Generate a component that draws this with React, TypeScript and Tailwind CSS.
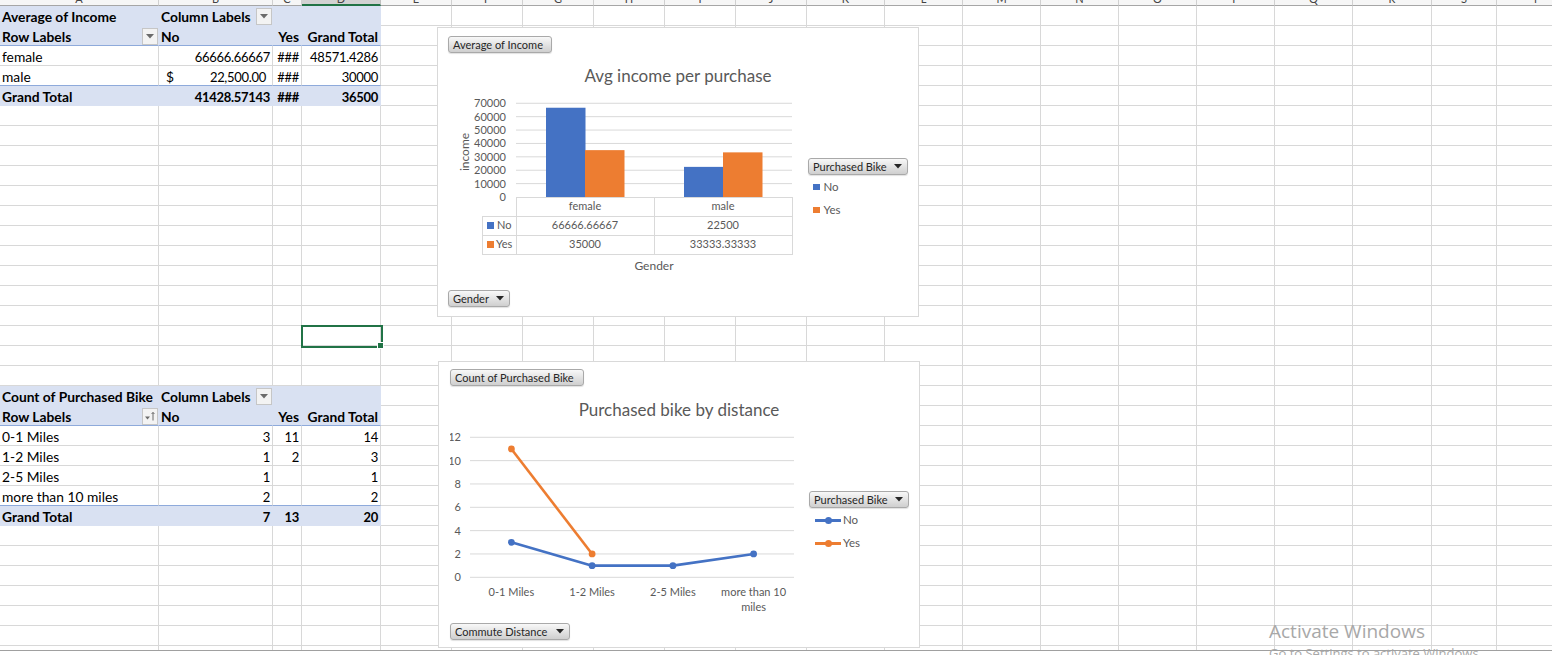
import React from 'react';

// sheet column widths (px), matched to the gridlines of the reference
const LETTERS = 'ABCDEFGHIJKLMNOPQRST'.split('');
const GRID = 'grid grid-cols-[159px_114px_29px_79px_repeat(6,71px)_repeat(7,78px)_79px_65px_78px]';
const ROWS = 33;

type Cell = { t?: string; b?: boolean; right?: boolean; acct?: boolean; dd?: 'filter' | 'sort' };
type PivotRow = { fill?: boolean; line?: boolean; cells: Cell[] };

const pivots: Record<number, PivotRow> = {
  1: { fill: true, cells: [{ t: 'Average of Income', b: true }, { t: 'Column Labels', b: true, dd: 'filter' }, {}, {}] },
  2: {
    fill: true,
    line: true,
    cells: [
      { t: 'Row Labels', b: true, dd: 'filter' },
      { t: 'No', b: true },
      { t: 'Yes', b: true, right: true },
      { t: 'Grand Total', b: true, right: true },
    ],
  },
  3: { cells: [{ t: 'female' }, { t: '66666.66667', right: true }, { t: '###', right: true }, { t: '48571.4286', right: true }] },
  4: {
    line: true,
    cells: [{ t: 'male' }, { t: '22,500.00', right: true, acct: true }, { t: '###', right: true }, { t: '30000', right: true }],
  },
  5: {
    fill: true,
    cells: [
      { t: 'Grand Total', b: true },
      { t: '41428.57143', b: true, right: true },
      { t: '###', b: true, right: true },
      { t: '36500', b: true, right: true },
    ],
  },
  20: { fill: true, cells: [{ t: 'Count of Purchased Bike', b: true }, { t: 'Column Labels', b: true, dd: 'filter' }, {}, {}] },
  21: {
    fill: true,
    line: true,
    cells: [
      { t: 'Row Labels', b: true, dd: 'sort' },
      { t: 'No', b: true },
      { t: 'Yes', b: true, right: true },
      { t: 'Grand Total', b: true, right: true },
    ],
  },
  22: { cells: [{ t: '0-1 Miles' }, { t: '3', right: true }, { t: '11', right: true }, { t: '14', right: true }] },
  23: { cells: [{ t: '1-2 Miles' }, { t: '1', right: true }, { t: '2', right: true }, { t: '3', right: true }] },
  24: { cells: [{ t: '2-5 Miles' }, { t: '1', right: true }, {}, { t: '1', right: true }] },
  25: { line: true, cells: [{ t: 'more than 10 miles' }, { t: '2', right: true }, {}, { t: '2', right: true }] },
  26: {
    fill: true,
    cells: [
      { t: 'Grand Total', b: true },
      { t: '7', b: true, right: true },
      { t: '13', b: true, right: true },
      { t: '20', b: true, right: true },
    ],
  },
};

function DropBox({ sort }: { sort?: boolean }) {
  return (
    <span className="-mr-[2px] mb-[1px] flex h-[17px] w-[16px] shrink-0 items-center justify-center border border-[#c6c6c6] bg-[#f3f3f3]">
      {sort ? (
        <svg width="12" height="12" viewBox="0 0 12 12">
          <path d="M1 6.5h5L3.5 9.5z" fill="#6b6b6b" />
          <path d="M9 2.5v8M7.6 4l1.4-1.6L10.4 4" stroke="#6b6b6b" strokeWidth="1" fill="none" />
        </svg>
      ) : (
        <svg width="8" height="5" viewBox="0 0 8 5">
          <path d="M0 0h8L4 4.5z" fill="#6b6b6b" />
        </svg>
      )}
    </span>
  );
}

function SheetCell({ row, col }: { row: number; col: number }) {
  const p = col < 4 ? pivots[row] : undefined;
  const cell = p?.cells[col];
  const fill = !!p?.fill;
  const line = !!p?.line;
  // Lato digits run wider than Calibri's, so numbers get a slightly smaller size
  const numeric = !!cell?.t && /^[\d.,#]+$/.test(cell.t);
  return (
    <div
      className={`flex h-[20px] items-center border-r border-b whitespace-nowrap px-[2px] pt-[2px] leading-[18px] text-black ${
        numeric ? 'text-[13px] tracking-[-0.3px]' : 'text-[13.8px]'
      } ${fill ? 'bg-[#d9e1f2] border-r-[#d9e1f2]' : 'border-r-[#d8d8d8]'} ${
        line ? 'border-b-[#8eaadb]' : fill ? 'border-b-[#d9e1f2]' : 'border-b-[#d8d8d8]'
      } ${cell?.dd || cell?.acct ? 'justify-between' : cell?.right ? 'justify-end' : ''} ${cell?.b ? 'font-bold' : ''} ${
        cell?.acct ? 'pl-[7px] pr-[6px]' : ''
      }`}
    >
      {cell?.acct && <span className="text-[13.8px]">$</span>}
      {cell?.t && <span>{cell.t}</span>}
      {cell?.dd && <DropBox sort={cell.dd === 'sort'} />}
    </div>
  );
}

function FieldBtn({ label, arrow, className }: { label: string; arrow?: boolean; className: string }) {
  return (
    <div
      className={`flex h-[17px] shrink-0 items-center justify-between self-start rounded-[3px] border border-[#a9a9a9] bg-linear-to-b from-[#f8f8f8] to-[#cfcfcf] pl-[4px] pr-[5px] text-[11px] leading-none text-[#262626] shadow-[0_1px_1px_rgba(0,0,0,0.12)] ${className}`}
    >
      <span>{label}</span>
      {arrow && (
        <svg width="8" height="5" viewBox="0 0 8 5">
          <path d="M0 0h8L4 4.5z" fill="#262626" />
        </svg>
      )}
    </div>
  );
}

const BLUE = '#4472c4';
const ORANGE = '#ed7d31';
const GRIDC = '#d9d9d9';
const TXT = '#595959';

function Legend({ line }: { line?: boolean }) {
  const items = [
    { l: 'No', c: 'bg-[#4472c4]' },
    { l: 'Yes', c: 'bg-[#ed7d31]' },
  ];
  return (
    <div className="flex flex-col pt-[105px]">
      <FieldBtn label="Purchased Bike" arrow className="w-[100px]" />
      <div className="mt-[4px] flex flex-col gap-[7px] text-[11.5px] text-[#595959]">
        {items.map((it) =>
          line ? (
            <div key={it.l} className="flex h-[16px] items-center pl-[6px]">
              <span className="relative flex h-[3px] w-[26px] items-center justify-center rounded-full">
                <span className={`absolute inset-0 ${it.c}`} />
                <span className={`relative h-[7px] w-[7px] rounded-full ${it.c}`} />
              </span>
              <span className="ml-[2px]">{it.l}</span>
            </div>
          ) : (
            <div key={it.l} className="flex h-[16px] items-center gap-[4px] pl-[5px]">
              <span className={`h-[6.5px] w-[6.5px] ${it.c}`} />
              <span>{it.l}</span>
            </div>
          )
        )}
      </div>
    </div>
  );
}

function IncomeChart() {
  const y0 = 169;
  const step = 13.39;
  const yv = (v: number) => y0 - (v / 10000) * step;
  const bars = [
    { x: 108, v: 66666.67, c: BLUE },
    { x: 147, v: 35000, c: ORANGE },
    { x: 246, v: 22500, c: BLUE },
    { x: 285, v: 33333.33, c: ORANGE },
  ];
  return (
    <div className="absolute left-[437px] top-[27px] flex h-[290px] w-[482px] flex-col border border-[#d9d9d9] bg-white pl-[10px] pt-[8px]">
      <FieldBtn label="Average of Income" className="w-[104px]" />
      <div className="flex">
        <svg width="360" height="237" viewBox="10 25 360 237" fontFamily="Lato, 'Liberation Sans', sans-serif">
          <text x="240" y="54" textAnchor="middle" fontSize="17" fill={TXT}>
            Avg income per purchase
          </text>
          {[0, 1, 2, 3, 4, 5, 6, 7].map((i) => (
            <g key={i}>
              {i > 0 && <line x1="78" x2="354" y1={y0 - i * step} y2={y0 - i * step} stroke={GRIDC} />}
              <text x="68" y={y0 - i * step + 4} textAnchor="end" fontSize="11" fill={TXT}>
                {i * 10000}
              </text>
            </g>
          ))}
          <text x="27" y="128" textAnchor="middle" fontSize="12" fill={TXT} transform="rotate(-90 27 124)">
            income
          </text>
          {bars.map((b) => (
            <rect key={b.x} x={b.x} y={yv(b.v)} width="39.5" height={y0 - yv(b.v)} fill={b.c} />
          ))}
          {/* data table */}
          <g stroke={GRIDC} strokeWidth="1">
            <line x1="78" x2="354.5" y1="169.5" y2="169.5" />
            <line x1="44" x2="354.5" y1="188.5" y2="188.5" />
            <line x1="44" x2="354.5" y1="207.5" y2="207.5" />
            <line x1="44" x2="354.5" y1="226.5" y2="226.5" />
            <line x1="44.5" x2="44.5" y1="188" y2="227" />
            <line x1="78.5" x2="78.5" y1="169" y2="227" />
            <line x1="216.5" x2="216.5" y1="169" y2="227" />
            <line x1="354.5" x2="354.5" y1="169" y2="227" />
          </g>
          <g fontSize="11" fill={TXT} textAnchor="middle">
            <text x="147" y="182">female</text>
            <text x="285" y="182">male</text>
            <text x="147" y="201">66666.66667</text>
            <text x="285" y="201">22500</text>
            <text x="147" y="220">35000</text>
            <text x="285" y="220">33333.33333</text>
          </g>
          <rect x="49" y="194" width="7" height="7" fill={BLUE} />
          <text x="59" y="201" fontSize="11" fill={TXT}>
            No
          </text>
          <rect x="49" y="213" width="7" height="7" fill={ORANGE} />
          <text x="58" y="220" fontSize="11" fill={TXT}>
            Yes
          </text>
          <text x="216" y="242" textAnchor="middle" fontSize="12" fill={TXT}>
            Gender
          </text>
        </svg>
        <Legend />
      </div>
      <FieldBtn label="Gender" arrow className="w-[62px]" />
    </div>
  );
}

function DistanceChart() {
  const y0 = 215.3;
  const unit = 11.667;
  const xs = [72.4, 153.1, 233.9, 314.6];
  const no = [3, 1, 1, 2];
  const yes = [11, 2];
  const pts = (vals: number[]) => vals.map((v, i) => `${xs[i]},${y0 - v * unit}`).join(' ');
  const labels = ['0-1 Miles', '1-2 Miles', '2-5 Miles'];
  return (
    <div className="absolute left-[438px] top-[361px] flex h-[287px] w-[482px] flex-col border border-[#d9d9d9] bg-white pl-[11px] pt-[7px]">
      <FieldBtn label="Count of Purchased Bike" className="w-[134px]" />
      <div className="flex">
        <svg width="359" height="237" viewBox="11 24 359 237" fontFamily="Lato, 'Liberation Sans', sans-serif">
          <text x="240" y="54" textAnchor="middle" fontSize="17" fill={TXT}>
            Purchased bike by distance
          </text>
          {[0, 2, 4, 6, 8, 10, 12].map((v) => (
            <g key={v}>
              <line x1="31" x2="355" y1={y0 - v * unit} y2={y0 - v * unit} stroke={GRIDC} />
              <text x="22" y={y0 - v * unit + 4} textAnchor="end" fontSize="11" fill={TXT}>
                {v}
              </text>
            </g>
          ))}
          {labels.map((l, i) => (
            <text key={l} x={xs[i]} y="234" textAnchor="middle" fontSize="11" fill={TXT}>
              {l}
            </text>
          ))}
          <text x={xs[3]} y="234" textAnchor="middle" fontSize="11" fill={TXT}>
            more than 10
          </text>
          <text x={xs[3]} y="249" textAnchor="middle" fontSize="11" fill={TXT}>
            miles
          </text>
          <polyline points={pts(no)} fill="none" stroke={BLUE} strokeWidth="2.6" strokeLinejoin="round" />
          <polyline points={pts(yes)} fill="none" stroke={ORANGE} strokeWidth="2.6" strokeLinejoin="round" />
          {no.map((v, i) => (
            <circle key={`n${i}`} cx={xs[i]} cy={y0 - v * unit} r="3.4" fill={BLUE} />
          ))}
          {yes.map((v, i) => (
            <circle key={`y${i}`} cx={xs[i]} cy={y0 - v * unit} r="3.4" fill={ORANGE} />
          ))}
        </svg>
        <Legend line />
      </div>
      <FieldBtn label="Commute Distance" arrow className="w-[120px]" />
    </div>
  );
}

export default function App() {
  return (
    <div className="relative h-[655px] w-[1552px] overflow-hidden bg-white [font-family:Lato,'Liberation_Sans',sans-serif]">
      {/* column headers, scrolled so only their bottom edge shows */}
      <div className={`${GRID} h-[6px] overflow-hidden`}>
        {LETTERS.map((l, i) => (
          <div
            key={l}
            className={`h-[6px] overflow-hidden border-r text-center text-[11px] leading-[11px] text-[#444] ${
              i === 3 ? 'border-b-2 border-b-[#217346] border-r-[#c0c0c0] bg-[#d2d2d2]' : 'border-b border-b-[#a6a6a6] border-r-[#d0d0d0] bg-[#f6f6f6]'
            }`}
          >
            <div className="-mt-[7px]">{l}</div>
          </div>
        ))}
      </div>

      {/* cells */}
      <div className={`${GRID} h-[644px] auto-rows-[20px] overflow-hidden`}>
        {Array.from({ length: ROWS }, (_, r) =>
          LETTERS.map((_, c) => <SheetCell key={`${r}-${c}`} row={r + 1} col={c} />)
        )}
      </div>
      <div className="h-px bg-[#a0a0a0]" />

      {/* active cell D17 */}
      <div className="absolute left-[301px] top-[325px] h-[23px] w-[82px] border-2 border-[#217346]">
        <span className="absolute -bottom-[3px] -right-[3px] h-[7px] w-[7px] border border-white bg-[#217346]" />
      </div>

      <IncomeChart />
      <DistanceChart />

      {/* windows activation watermark */}
      <div className="pointer-events-none absolute left-[1269px] top-[618px] whitespace-nowrap text-[#a8a8a8] [font-family:'Open_Sans',sans-serif]">
        <div className="text-[19px] leading-[26px]">Activate Windows</div>
        <div className="text-[13px] leading-[18px]">Go to Settings to activate Windows.</div>
      </div>
    </div>
  );
}
